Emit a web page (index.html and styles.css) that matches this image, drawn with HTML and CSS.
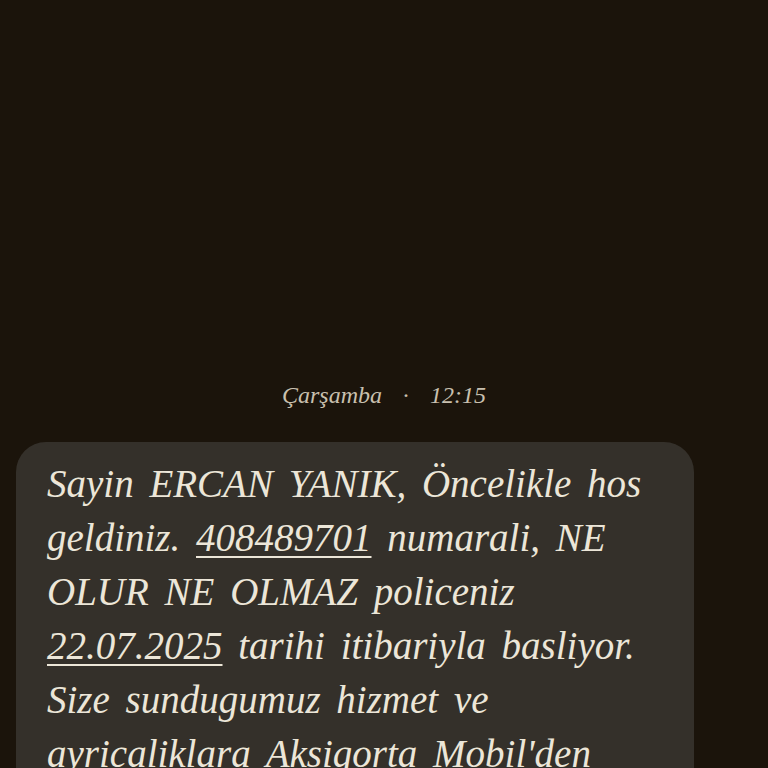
FILE: index.html
```html
<!DOCTYPE html>
<html lang="tr">
<head>
<meta charset="utf-8">
<title>Mesaj</title>
<link rel="stylesheet" href="styles.css">
</head>
<body>
<main class="thread">
  <div class="stamp"><span class="day">Çarşamba</span><span class="dot">·</span><span class="time">12:15</span></div>
  <div class="bubble">
    <p class="msg">Sayin ERCAN YANIK, Öncelikle hos geldiniz. <span class="link">408489701</span> numarali, NE OLUR NE OLMAZ policeniz <span class="link">22.07.2025</span> tarihi itibariyla basliyor. Size sundugumuz hizmet ve ayricaliklara Aksigorta Mobil'den ulasabilirsiniz. Iyi gunler dileriz.</p>
  </div>
</main>
</body>
</html>
```
FILE: styles.css
```css
html, body {
  margin: 0;
  padding: 0;
  background: #1b140b;
  height: 100%;
  overflow: hidden;
}
.thread {
  display: flex;
  flex-direction: column;
  padding-top: 380px;
  font-family: "Liberation Serif", serif;
  font-style: italic;
}
.stamp {
  display: flex;
  justify-content: center;
  font-size: 24px;
  line-height: 30px;
  color: #c9c0af;
}
.dot {
  margin: 0 20px;
  font-style: normal;
}
.bubble {
  margin: 32px 0 0 16px;
  width: 678px;
  box-sizing: border-box;
  padding: 15px 28px 40px 31px;
  background: #34302a;
  border-radius: 30px;
}
.msg {
  margin: 0;
  font-size: 39px;
  line-height: 54px;
  word-spacing: 6px;
  color: #ece6d8;
}
.link {
  text-decoration: underline;
  text-decoration-thickness: 2px;
  text-underline-offset: 5px;
}
```
